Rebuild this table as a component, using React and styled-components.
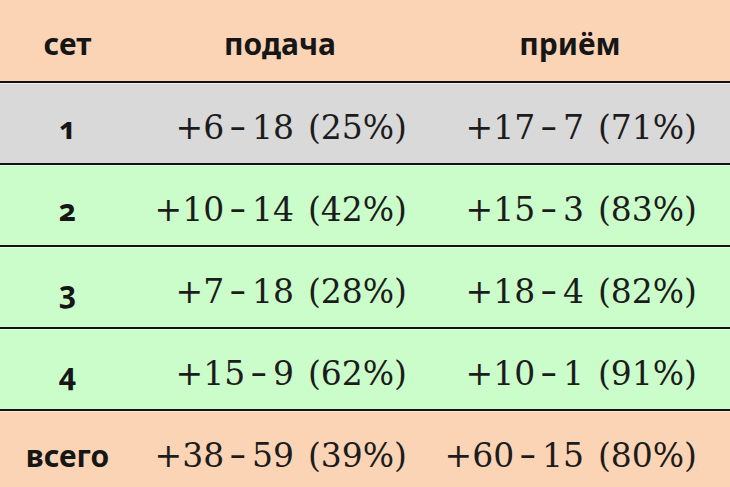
import styled, { createGlobalStyle } from "styled-components"

const GlobalStyle = createGlobalStyle`
    html, body {
        margin: 0;
        padding: 0;
        background: #fbd4b5;
    }
`

const colors = {
    peach: "#fbd4b5",
    grey: "#d9d9d9",
    green: "#cbfdca",
}

const StyledTable = styled.div`
    width: 730px;
    height: 487px;
    overflow: hidden;
    color: #161616;
`

const StyledRow = styled.div`
    display: grid;
    grid-template-columns: 135px 290px 290px 15px;
    height: ${props => props.$head ? "81px" : "80px"};
    background: ${props => colors[props.$bg]};
    border-top: ${props => props.$head ? "none" : "2px solid #121212"};
    box-shadow: ${props => props.$head ? "none" : "inset 0 1px 0 rgba(255,255,255,0.55)"};
`

const StyledLabel = styled.div`
    display: flex;
    align-items: center;
    justify-content: center;
    font-family: "Noto Sans", sans-serif;
    font-weight: 700;
    font-size: 30px;
    font-variant-numeric: oldstyle-nums;
    padding-top: ${props => props.$head ? "6px" : "8px"};
`

const StyledScore = styled.div`
    display: flex;
    align-items: center;
    justify-content: flex-end;
    gap: 14px;
    padding: 8px 18px 0 0;
    font-family: "DejaVu Serif", "Liberation Serif", serif;
    font-size: 33px;
    color: #1c1c1c;
`

const StyledPair = styled.span`
    white-space: nowrap;
`

const StyledMinus = styled.span`
    display: inline-block;
    transform: scaleX(0.62);
    margin: 0;
`

const StyledPct = styled.span`
    white-space: nowrap;
`

const rows = [
    { label: "1", bg: "grey", serve: [6, 18, 25], receive: [17, 7, 71] },
    { label: "2", bg: "green", serve: [10, 14, 42], receive: [15, 3, 83] },
    { label: "3", bg: "green", serve: [7, 18, 28], receive: [18, 4, 82] },
    { label: "4", bg: "green", serve: [15, 9, 62], receive: [10, 1, 91] },
    { label: "всего", bg: "peach", serve: [38, 59, 39], receive: [60, 15, 80] },
]

function Score({ value }) {
    const [won, lost, pct] = value
    return (
        <StyledScore>
            <StyledPair>
                +{won}<StyledMinus>−</StyledMinus>{lost}
            </StyledPair>
            <StyledPct>({pct}%)</StyledPct>
        </StyledScore>
    )
}

function App() {
    return (
        <>
            <GlobalStyle />
            <StyledTable>
                <StyledRow $head $bg="peach">
                    <StyledLabel $head>сет</StyledLabel>
                    <StyledLabel $head>подача</StyledLabel>
                    <StyledLabel $head>приём</StyledLabel>
                </StyledRow>
                {rows.map(row => (
                    <StyledRow key={row.label} $bg={row.bg}>
                        <StyledLabel>{row.label}</StyledLabel>
                        <Score value={row.serve} />
                        <Score value={row.receive} />
                    </StyledRow>
                ))}
            </StyledTable>
        </>
    )
}

export default App
